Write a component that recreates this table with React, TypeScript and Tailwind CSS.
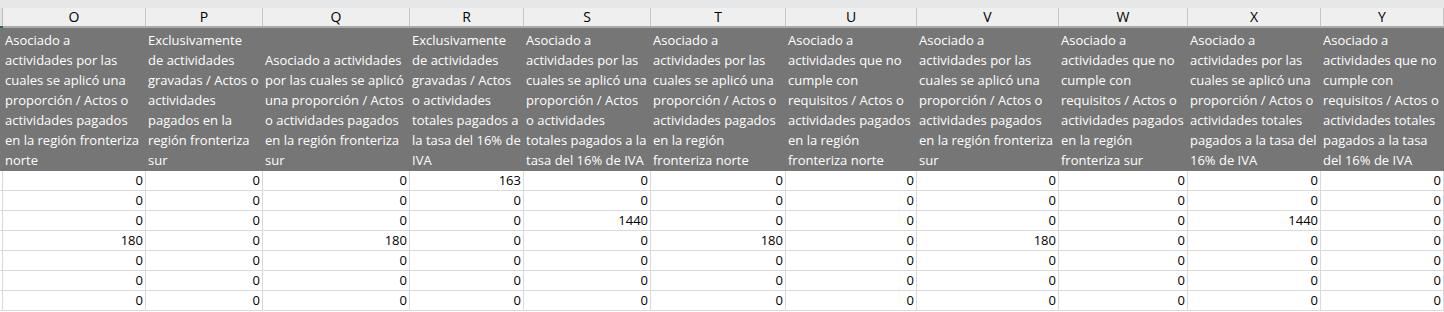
import React from "react";

type Col = { letter: string; w: string; head: string[] };

const cols: Col[] = [
  {
    letter: "O",
    w: "w-[143px]",
    head: ["Asociado a", "actividades por las", "cuales se aplicó una", "proporción / Actos o", "actividades pagados", "en la región fronteriza", "norte"],
  },
  {
    letter: "P",
    w: "w-[117px]",
    head: ["Exclusivamente", "de actividades", "gravadas / Actos o", "actividades", "pagados en la", "región fronteriza", "sur"],
  },
  {
    letter: "Q",
    w: "w-[147px]",
    head: ["Asociado a actividades", "por las cuales se aplicó", "una proporción / Actos", "o actividades pagados", "en la región fronteriza", "sur"],
  },
  {
    letter: "R",
    w: "w-[114px]",
    head: ["Exclusivamente", "de actividades", "gravadas / Actos", "o actividades", "totales pagados a", "la tasa del 16% de", "IVA"],
  },
  {
    letter: "S",
    w: "w-[127px]",
    head: ["Asociado a", "actividades por las", "cuales se aplicó una", "proporción / Actos", "o actividades", "totales pagados a la", "tasa del 16% de IVA"],
  },
  {
    letter: "T",
    w: "w-[135px]",
    head: ["Asociado a", "actividades por las", "cuales se aplicó una", "proporción / Actos o", "actividades pagados", "en la región", "fronteriza norte"],
  },
  {
    letter: "U",
    w: "w-[131px]",
    head: ["Asociado a", "actividades que no", "cumple con", "requisitos / Actos o", "actividades pagados", "en la región", "fronteriza norte"],
  },
  {
    letter: "V",
    w: "w-[142px]",
    head: ["Asociado a", "actividades por las", "cuales se aplicó una", "proporción / Actos o", "actividades pagados", "en la región fronteriza", "sur"],
  },
  {
    letter: "W",
    w: "w-[129px]",
    head: ["Asociado a", "actividades que no", "cumple con", "requisitos / Actos o", "actividades pagados", "en la región", "fronteriza sur"],
  },
  {
    letter: "X",
    w: "w-[133px]",
    head: ["Asociado a", "actividades por las", "cuales se aplicó una", "proporción / Actos o", "actividades totales", "pagados a la tasa del", "16% de IVA"],
  },
  {
    letter: "Y",
    w: "w-[123px]",
    head: ["Asociado a", "actividades que no", "cumple con", "requisitos / Actos o", "actividades totales", "pagados a la tasa", "del 16% de IVA"],
  },
];

// values for O..Y, one array per row
const rows: number[][] = [
  [0, 0, 0, 163, 0, 0, 0, 0, 0, 0, 0],
  [0, 0, 0, 0, 0, 0, 0, 0, 0, 0, 0],
  [0, 0, 0, 0, 1440, 0, 0, 0, 0, 1440, 0],
  [180, 0, 180, 0, 0, 180, 0, 180, 0, 0, 0],
  [0, 0, 0, 0, 0, 0, 0, 0, 0, 0, 0],
  [0, 0, 0, 0, 0, 0, 0, 0, 0, 0, 0],
  [0, 0, 0, 0, 0, 0, 0, 0, 0, 0, 0],
];

const font = "font-['Open_Sans','Liberation_Sans',sans-serif]";

export default function App() {
  return (
    <div className={`w-[1444px] h-[312px] overflow-hidden bg-white ${font}`}>
      <div className="h-[8px] bg-[#e6e7e9]" />

      {/* column letters */}
      <div className="flex h-[20px] bg-[#efefef] border-b-2 border-[#a9a9a9]">
        <div className="relative w-[3px] shrink-0 border-r border-[#bdbdbd] bg-[#e2e2e2]">
          <div className="absolute left-0 bottom-[-2px] w-[3px] h-[2px] bg-[#217346]" />
        </div>
        {cols.map((c) => (
          <div
            key={c.letter}
            className={`${c.w} shrink-0 border-r border-[#c6c6c6] flex items-center justify-center text-[14px] text-black leading-none`}
          >
            {c.letter}
          </div>
        ))}
      </div>

      {/* header descriptions, bottom aligned like excel */}
      <div className="flex h-[143px] bg-[#767676]">
        <div className="w-[3px] shrink-0" />
        {cols.map((c) => (
          <div
            key={c.letter}
            className={`${c.w} shrink-0 flex flex-col justify-end pl-[2px] pb-[1px] text-[13px] leading-[20px] text-white overflow-hidden`}
          >
            {c.head.map((line, i) => (
              <div key={i} className="whitespace-nowrap">
                {line}
              </div>
            ))}
          </div>
        ))}
      </div>

      {/* data */}
      {rows.map((r, ri) => (
        <div key={ri} className="flex h-[20px] border-b border-[#dadada]">
          <div className="w-[3px] shrink-0 border-r border-[#dadada]" />
          {cols.map((c, ci) => (
            <div
              key={c.letter}
              className={`${c.w} shrink-0 border-r border-[#dadada] flex items-center justify-end pr-[2px] text-[13px] text-black leading-none`}
            >
              {r[ci]}
            </div>
          ))}
        </div>
      ))}
    </div>
  );
}
